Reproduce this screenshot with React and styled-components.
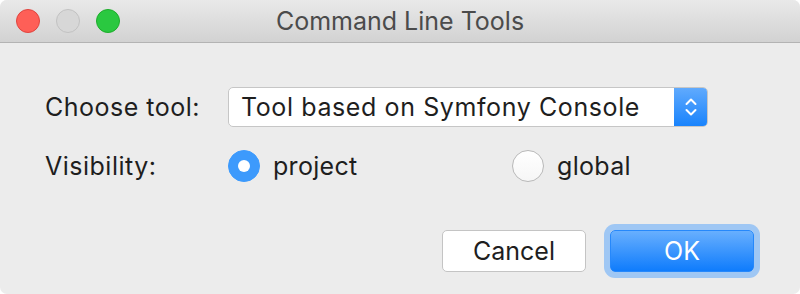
import React, { useState } from "react";
import styled, { createGlobalStyle } from "styled-components";

const GlobalStyle = createGlobalStyle`
  html, body {
    margin: 0;
    padding: 0;
    background: #ffffff;
  }
  body {
    font-family: "Inter", "Roboto", "Liberation Sans", sans-serif;
  }
`;

const Window = styled.div`
  width: 800px;
  height: 294px;
  box-sizing: border-box;
  background: #ececec;
  border-radius: 7px;
  overflow: hidden;
  display: flex;
  flex-direction: column;
`;

const TitleBar = styled.div`
  height: 42px;
  flex-shrink: 0;
  background: linear-gradient(180deg, #e9e9e9, #d2d2d2);
  border-bottom: 1px solid #b3b3b3;
  display: flex;
  align-items: center;
  position: relative;
  padding-left: 16px;
  gap: 16px;
`;

const Light = styled.span`
  width: 24px;
  height: 24px;
  border-radius: 50%;
  box-sizing: border-box;
  background: ${(p) => p.$bg};
  border: 1px solid ${(p) => p.$border};
`;

const Title = styled.div`
  position: absolute;
  left: 0;
  right: 0;
  text-align: center;
  font-size: 25px;
  color: #4b4b4b;
  pointer-events: none;
`;

const Body = styled.div`
  flex: 1;
  display: flex;
  flex-direction: column;
  padding: 44px 46px 0 45px;
`;

const Form = styled.div`
  display: grid;
  grid-template-columns: 183px 1fr;
  row-gap: 23px;
  align-items: center;
`;

const Label = styled.div`
  font-size: 25px;
  letter-spacing: 0.5px;
  color: #1e1e1e;
`;

const Select = styled.div`
  width: 480px;
  height: 40px;
  box-sizing: border-box;
  display: flex;
  background: #ffffff;
  border: 1px solid #c6c6c6;
  border-radius: 5px;
  overflow: hidden;
`;

const SelectValue = styled.div`
  flex: 1;
  display: flex;
  align-items: center;
  padding-left: 12px;
  font-size: 25px;
  letter-spacing: 0.6px;
  color: #1e1e1e;
`;

const Stepper = styled.div`
  width: 34px;
  background: linear-gradient(180deg, #62abfd, #1782fc);
  display: flex;
  align-items: center;
  justify-content: center;
  margin: -1px -1px -1px 0;
`;

const Options = styled.div`
  display: flex;
  height: 32px;
  align-items: center;
`;

const Option = styled.label`
  width: 284px;
  display: flex;
  align-items: center;
  gap: 13px;
  font-size: 25px;
  letter-spacing: 0.3px;
  color: #1e1e1e;
  cursor: pointer;
`;

const Radio = styled.span`
  width: 32px;
  height: 32px;
  box-sizing: border-box;
  border-radius: 50%;
  display: flex;
  align-items: center;
  justify-content: center;
  background: ${(p) =>
    p.$checked ? "#3d9afc" : "linear-gradient(180deg, #ffffff, #f6f6f6)"};
  border: 1px solid ${(p) => (p.$checked ? "#3d9afc" : "#b9b9b9")};

  &::after {
    content: "";
    display: ${(p) => (p.$checked ? "block" : "none")};
    width: 12px;
    height: 12px;
    border-radius: 50%;
    background: #ffffff;
  }
`;

const Footer = styled.div`
  display: flex;
  justify-content: flex-end;
  gap: 24px;
  margin-top: 48px;
`;

const Button = styled.button`
  width: 144px;
  height: 42px;
  box-sizing: border-box;
  border-radius: 5px;
  font-family: inherit;
  font-size: 25px;
  cursor: pointer;
  border: 1px solid ${(p) => (p.$primary ? "#2688fb" : "#c4c4c4")};
  color: ${(p) => (p.$primary ? "#ffffff" : "#1e1e1e")};
  background: ${(p) =>
    p.$primary ? "linear-gradient(180deg, #68affe, #0f7cfc)" : "#ffffff"};
  box-shadow: ${(p) => (p.$primary ? "0 0 0 6px #9fc7f4" : "none")};
`;

const Chevrons = () => (
  <svg width="14" height="24" viewBox="0 0 14 24" fill="none">
    <path d="M2.5 9 L7 4.5 L11.5 9" stroke="#fff" strokeWidth="2" strokeLinecap="round" strokeLinejoin="round" />
    <path d="M2.5 15 L7 19.5 L11.5 15" stroke="#fff" strokeWidth="2" strokeLinecap="round" strokeLinejoin="round" />
  </svg>
);

export default function App() {
  const [visibility, setVisibility] = useState("project");

  return (
    <>
      <GlobalStyle />
      <Window>
        <TitleBar>
          <Light $bg="#fe5f57" $border="#e0443e" />
          <Light $bg="#d7d7d7" $border="#c2c2c2" />
          <Light $bg="#2ac840" $border="#1dad2b" />
          <Title>Command Line Tools</Title>
        </TitleBar>
        <Body>
          <Form>
            <Label>Choose tool:</Label>
            <Select>
              <SelectValue>Tool based on Symfony Console</SelectValue>
              <Stepper>
                <Chevrons />
              </Stepper>
            </Select>
            <Label>Visibility:</Label>
            <Options>
              {["project", "global"].map((v) => (
                <Option key={v} onClick={() => setVisibility(v)}>
                  <Radio $checked={visibility === v} />
                  {v}
                </Option>
              ))}
            </Options>
          </Form>
          <Footer>
            <Button>Cancel</Button>
            <Button $primary>OK</Button>
          </Footer>
        </Body>
      </Window>
    </>
  );
}
